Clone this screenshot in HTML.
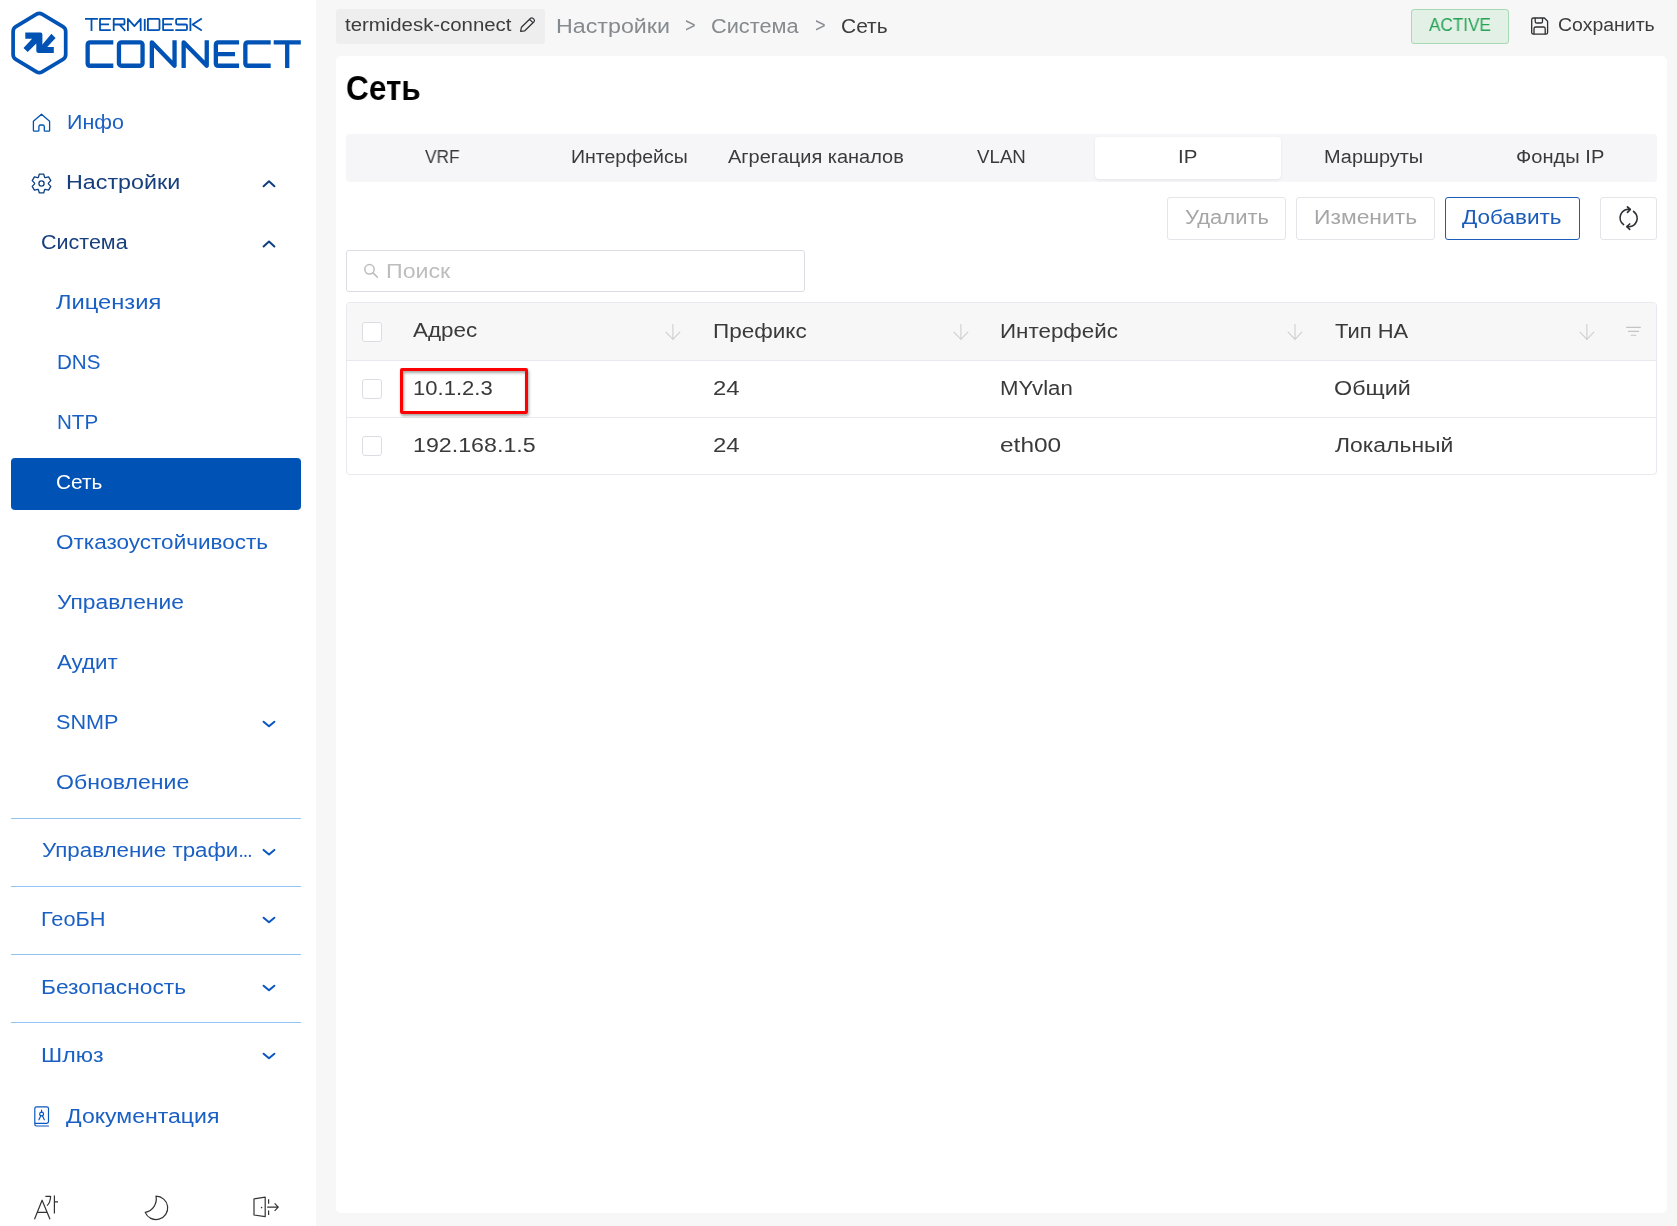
<!DOCTYPE html>
<html><head><meta charset="utf-8">
<style>
html,body{margin:0;padding:0;}
body{width:1677px;height:1226px;position:relative;overflow:hidden;background:#f7f7f7;font-family:"Liberation Sans",sans-serif;}
.t{position:absolute;line-height:1;white-space:nowrap;transform-origin:0 50%;will-change:transform;}
.sb{position:absolute;left:0;top:0;width:316px;height:1226px;background:#fff;}
.nav{font-size:20px;color:#0b57c0;}
.navd{font-size:20px;color:#0e3f80;}
.div{position:absolute;left:11px;width:290px;height:1px;background:#8fc6f6;}
.ic{position:absolute;}
.card{position:absolute;left:336px;top:56px;width:1331px;height:1157px;background:#fff;border-radius:5px;}
.chip{position:absolute;left:336px;top:9px;width:209px;height:35px;background:#eeeeee;border-radius:3px;}
.bc{font-size:20px;color:#858a8f;}
.dk{color:#3a3a3a;}
.badge{position:absolute;left:1411px;top:9px;width:96px;height:33px;background:#e2f0e6;border:1px solid #a6d9b4;border-radius:3px;}
.tabs{position:absolute;left:346px;top:134px;width:1311px;height:48px;background:#f6f6f9;border-radius:4px;}
.tabact{position:absolute;left:1095px;top:137px;width:186px;height:42px;background:#fff;border-radius:4px;box-shadow:0 1px 3px rgba(0,0,0,0.08);}
.tab{font-size:18px;color:#333;}
.btn{position:absolute;top:197px;height:41px;background:#fff;border:1px solid #e4e5e9;border-radius:3px;}
.btnt{font-size:20px;color:#a6a6a6;}
.search{position:absolute;left:346px;top:250px;width:457px;height:40px;border:1px solid #dcdde4;border-radius:3px;background:#fff;}
.table{position:absolute;left:346px;top:302px;width:1309px;height:171px;border:1px solid #e9e9f0;border-radius:4px;background:#fff;overflow:hidden;}
.thead{position:absolute;left:0;top:0;width:1309px;height:57px;background:#f7f7f7;border-bottom:1px solid #e8e8ee;}
.rowl{position:absolute;left:0;width:1309px;height:1px;background:#e8e8ee;}
.cell{font-size:20px;color:#333;}
.cb{position:absolute;left:362px;width:18px;height:18px;border:1px solid #dcdde2;border-radius:3px;background:#fff;}
</style></head><body>
<div class="sb"></div>

<!-- main -->
<div class="card"></div>
<div class="chip"></div>
<div class="badge"></div>
<div class="tabs"></div>
<div class="tabact"></div>
<div class="btn" style="left:1167px;width:117px;"></div>
<div class="btn" style="left:1296px;width:137px;"></div>
<div class="btn" style="left:1445px;width:133px;border-color:#1a5cb8;"></div>
<div class="btn" style="left:1600px;width:55px;"></div>
<div class="search"></div>
<div class="table">
  <div class="thead"></div>
  <div class="rowl" style="top:114px"></div>
</div>
<div class="cb" style="top:322px"></div>
<div class="cb" style="top:379px"></div>
<div class="cb" style="top:436px"></div>
<div style="position:absolute;left:400px;top:368px;width:122px;height:40px;border:3px solid #ff0000;border-radius:2px;box-shadow:1px 2px 3px rgba(0,0,0,0.35), inset 1px 2px 3px rgba(0,0,0,0.35);"></div>

<!--STATIC-->
<div style="position:absolute;left:11px;top:458px;width:290px;height:52px;background:#0052b4;border-radius:4px;"></div>
<div class="div" style="top:818px"></div>
<div class="div" style="top:886px"></div>
<div class="div" style="top:954px"></div>
<div class="div" style="top:1022px"></div>
<svg style="position:absolute;left:0;top:0" width="316" height="1226" viewBox="0 0 316 1226">
 <g fill="none" stroke="#0052b4">
  <path d="M36.56,14.14 Q39.30,12.50 42.05,14.14 L62.95,26.56 Q65.70,28.20 65.70,31.40 L65.70,54.60 Q65.70,57.80 62.95,59.44 L42.05,71.86 Q39.30,73.50 36.56,71.86 L15.84,59.44 Q13.10,57.80 13.10,54.60 L13.10,31.40 Q13.10,28.20 15.84,26.56 Z" stroke-width="3.7" stroke-linejoin="round"/>
 </g>
 <g fill="#0052b4">
  <path d="M25.3,32.6 H40.6 Q42.4,32.6 42.4,34.4 V46.9 H53.8 V52.9 H38.1 Q36.3,52.9 36.3,51.1 V43.5 L27.7,52.1 L23.5,47.9 L32.1,38.7 H25.3 Z"/>
  <path d="M51.4,33.8 L55.6,38 L47.2,46.9 H40 L42.4,44.5 Z"/>
 </g>
 <g fill="none" stroke="#0052b4" stroke-width="4.3" stroke-linejoin="round">
  <path d="M113.3,42.35 H90.2 Q87.65,42.35 87.65,44.9 V63.2 Q87.65,65.75 90.2,65.75 H113.3"/>
  <rect x="118.95" y="42.35" width="23.6" height="23.4" rx="2.5"/>
  <path d="M151.85,67.9 V42.35 L174.55,65.75 V40.2"/>
  <path d="M183.65,67.9 V42.35 L206.75,65.75 V40.2"/>
  <path d="M239.1,42.35 H218.4 Q215.85,42.35 215.85,44.9 V63.2 Q215.85,65.75 218.4,65.75 H239.1 M215.85,54.2 H235"/>
  <path d="M270.7,42.35 H247.9 Q245.35,42.35 245.35,44.9 V63.2 Q245.35,65.75 247.9,65.75 H270.7"/>
  <path d="M273.7,42.35 H300.8 M287.2,42.35 V67.9"/>
 </g>
 <g fill="none" stroke="#0052b4" stroke-width="1.8" stroke-linejoin="round">
  <path d="M85,18.9 H97.9 M91.5,18.9 V30.9"/>
  <path d="M110.8,18.9 H100 V30.1 H110.8 M100,24.4 H109"/>
  <path d="M113.7,30.9 V18.9 H123.5 Q124.5,18.9 124.5,19.9 V23.5 Q124.5,24.5 123.5,24.5 H113.7 M119.5,24.5 L125.3,30.9"/>
  <path d="M127.9,30.9 V18.9 L134.4,26.2 L140.7,18.9 V30.9"/>
  <path d="M144.75,18.9 V30.9"/>
  <path d="M147.9,18.9 H158.3 Q159.5,18.9 159.5,20.1 V28.9 Q159.5,30.1 158.3,30.1 H147.9 Z"/>
  <path d="M173.7,18.9 H163.1 V30.1 H173.7 M163.1,24.4 H172"/>
  <path d="M187.8,18.9 H177.3 Q176.1,18.9 176.1,20.1 V23.3 Q176.1,24.5 177.3,24.5 H185.8 Q187,24.5 187,25.7 V28.9 Q187,30.1 185.8,30.1 H175.3"/>
  <path d="M190.4,18.1 V30.9 M201.8,18.5 L192.6,24.5 L201.8,30.5"/>
 </g>
 <circle cx="241.1" cy="855.9" r="1.15" fill="#1a60c4"/><circle cx="245.5" cy="855.9" r="1.15" fill="#1a60c4"/><circle cx="249.9" cy="855.9" r="1.15" fill="#1a60c4"/>
 <!-- home -->
 <path d="M41.5,114.3 L33.4,121.3 V130.4 Q33.4,131.2 34.2,131.2 H38.1 Q38.9,131.2 38.9,130.4 V126.8 Q38.9,125 40.7,125 H42.5 Q44.3,125 44.3,126.8 V130.4 Q44.3,131.2 45.1,131.2 H48.8 Q49.6,131.2 49.6,130.4 V121.3 Z" fill="none" stroke="#0052b4" stroke-width="1.3" stroke-linejoin="round"/>
 <!-- gear -->
 <path d="M38.37,177.35 L39.32,174.05 L43.68,174.05 L44.63,177.35 L45.26,177.71 L48.59,176.88 L50.78,180.66 L48.39,183.14 L48.39,183.86 L50.78,186.34 L48.59,190.12 L45.26,189.29 L44.63,189.65 L43.68,192.95 L39.32,192.95 L38.37,189.65 L37.74,189.29 L34.41,190.12 L32.22,186.34 L34.61,183.86 L34.61,183.14 L32.22,180.66 L34.41,176.88 L37.74,177.71Z" fill="none" stroke="#0e3f80" stroke-width="1.3" stroke-linejoin="round"/>
 <circle cx="41.5" cy="183.5" r="2.6" fill="none" stroke="#0e3f80" stroke-width="1.3"/>
 <!-- chevrons -->
 <g fill="none" stroke-width="2" stroke-linecap="round" stroke-linejoin="round">
  <path d="M263.6,186.2 L269,181.2 L274.4,186.2" stroke="#0e3f80"/>
  <path d="M263.6,246.5 L269,241.5 L274.4,246.5" stroke="#0e3f80"/>
  <path d="M263.6,721.7 L269,726.3 L274.4,721.7" stroke="#0b57c0"/>
  <path d="M263.6,849.9 L269,854.5 L274.4,849.9" stroke="#0b57c0"/>
  <path d="M263.6,917.7 L269,922.3 L274.4,917.7" stroke="#0b57c0"/>
  <path d="M263.6,985.7 L269,990.3 L274.4,985.7" stroke="#0b57c0"/>
  <path d="M263.6,1053.7 L269,1058.3 L274.4,1053.7" stroke="#0b57c0"/>
 </g>
 <!-- book -->
 <g fill="none" stroke="#0b57c0" stroke-width="1.2" stroke-linejoin="round" stroke-linecap="round">
  <path d="M34.8,1123.3 V1108.6 Q34.8,1106.9 36.5,1106.9 H46.8 Q48.5,1106.9 48.5,1108.6 V1121.6 Q48.5,1123.3 46.8,1123.3 H34.8 V1124.3 Q34.8,1126 36.5,1126 H48.5"/>
  <circle cx="41.6" cy="1114" r="1.9"/>
  <path d="M41.6,1110.2 V1112.1 M40.8,1115.8 L38.9,1119.8 M42.4,1115.8 L44.3,1119.8"/>
 </g>
 <!-- bottom icons -->
 <g fill="none" stroke="#333" stroke-width="1.2" stroke-linejoin="round">
  <path d="M34.5,1219.2 L42.1,1200.2 L50,1219.2 M37.3,1212.4 H47.2"/>
  <path d="M45.4,1196.4 H50.6 Q50.4,1202.5 47,1205.6 M54.4,1195.4 V1213.4 M54.4,1201.8 H58"/>
  <path transform="translate(140.4,1192.3) scale(1.3)" stroke-width="0.95" d="M12,3 A10.5,10.5 0 0 1 3.687,15.446 A9,9 0 1 0 12,3 Z"/>
  <path d="M254,1198.8 L265.2,1197.2 V1216.6 L254,1215 Z M268.6,1199.2 V1203.8 M268.6,1210.4 V1215 M267.2,1207.1 H278.2 M274.6,1203.4 L278.3,1207.1 L274.6,1210.8"/>
 </g>
 <circle cx="261.6" cy="1207.6" r="0.8" fill="#333"/>
</svg>
<svg style="position:absolute;left:316px;top:0" width="1361" height="1226" viewBox="316 0 1361 1226">
 <!-- pencil -->
 <g fill="none" stroke="#2e3033" stroke-width="1.2" stroke-linejoin="round">
  <path d="M520.6,31.3 L521.4,27.3 L530.6,18.3 Q531.8,17.3 533,18.4 L534,19.4 Q535,20.6 534,21.7 L524.8,30.8 Z M529.6,19.4 L532.9,22.7"/>
 </g>
 <!-- save -->
 <g fill="none" stroke="#2e3033" stroke-width="1.3" stroke-linejoin="round">
  <path d="M1531.7,19.7 Q1531.7,18 1533.4,18 H1544.4 L1547.6,21.2 V32.5 Q1547.6,34.2 1545.9,34.2 H1533.4 Q1531.7,34.2 1531.7,32.5 Z"/>
  <path d="M1535.2,18 V21.4 Q1535.2,23 1536.8,23 H1540.9 Q1542.5,23 1542.5,21.4 V18"/>
  <path d="M1534,34.2 V28.8 Q1534,27 1535.8,27 H1543.4 Q1545.2,27 1545.2,28.8 V34.2"/>
 </g>
 <!-- refresh -->
 <g fill="none" stroke="#2e3033" stroke-width="1.7" stroke-linecap="round" stroke-linejoin="round">
  <path d="M1623.6,224.6 A8.4,8.4 0 0 1 1630,209.5"/>
  <path d="M1627.5,207 L1630.3,209.5 L1627.5,212.3"/>
  <path d="M1633.6,211.5 A8.4,8.4 0 0 1 1627.2,226.6"/>
  <path d="M1629.7,224 L1626.9,226.6 L1629.7,229.3"/>
 </g>
 <!-- search -->
 <g fill="none" stroke="#bcbcbc" stroke-width="1.5" stroke-linecap="round">
  <circle cx="369.5" cy="269.3" r="4.7"/>
  <path d="M373,272.9 L377.4,277.2"/>
 </g>
 <!-- sort arrows -->
 <g fill="none" stroke="#cfcfcf" stroke-width="1.1" stroke-linecap="round" stroke-linejoin="round">
  <path d="M672.9,324.6 V339.4 M666,332.2 L672.9,339.4 L679.8,332.2"/>
  <path d="M960.9,324.6 V339.4 M954,332.2 L960.9,339.4 L967.8,332.2"/>
  <path d="M1295,324.6 V339.4 M1288.1,332.2 L1295,339.4 L1301.9,332.2"/>
  <path d="M1586.9,324.6 V339.4 M1580,332.2 L1586.9,339.4 L1593.8,332.2"/>
 </g>
 <g fill="none" stroke="#c4c4c4" stroke-width="1.1" stroke-linecap="round">
  <path d="M1626.6,327.4 H1640.3 M1628.5,331.4 H1638.6 M1631.2,335.3 H1635.8"/>
 </g>
</svg>
<!--/STATIC-->
<!--TEXT-->
<div class="t" style="left:66.6px;top:111.7px;font-size:20px;color:#1a60c4;transform:scaleX(1.073)">Инфо</div>
<div class="t" style="left:66.2px;top:172.0px;font-size:20px;color:#173f7e;transform:scaleX(1.165)">Настройки</div>
<div class="t" style="left:40.6px;top:232.3px;font-size:20px;color:#173f7e;transform:scaleX(1.075)">Система</div>
<div class="t" style="left:55.9px;top:292.4px;font-size:20px;color:#1a60c4;transform:scaleX(1.185)">Лицензия</div>
<div class="t" style="left:56.9px;top:352.1px;font-size:20px;color:#1a60c4;transform:scaleX(1.029)">DNS</div>
<div class="t" style="left:56.9px;top:412.0px;font-size:20px;color:#1a60c4;transform:scaleX(1.029)">NTP</div>
<div class="t" style="left:55.8px;top:471.8px;font-size:20px;color:#ffffff;transform:scaleX(1.040)">Сеть</div>
<div class="t" style="left:55.7px;top:531.9px;font-size:20px;color:#1a60c4;transform:scaleX(1.126)">Отказоустойчивость</div>
<div class="t" style="left:56.8px;top:592.0px;font-size:20px;color:#1a60c4;transform:scaleX(1.141)">Управление</div>
<div class="t" style="left:56.8px;top:652.0px;font-size:20px;color:#1a60c4;transform:scaleX(1.115)">Аудит</div>
<div class="t" style="left:55.7px;top:712.0px;font-size:20px;color:#1a60c4;transform:scaleX(1.082)">SNMP</div>
<div class="t" style="left:55.6px;top:772.0px;font-size:20px;color:#1a60c4;transform:scaleX(1.154)">Обновление</div>
<div class="t" style="left:41.6px;top:840.2px;font-size:20px;color:#1a60c4;transform:scaleX(1.117)">Управление трафи</div>
<div class="t" style="left:40.7px;top:908.7px;font-size:20px;color:#1a60c4;transform:scaleX(1.089)">ГеоБН</div>
<div class="t" style="left:40.7px;top:976.7px;font-size:20px;color:#1a60c4;transform:scaleX(1.137)">Безопасность</div>
<div class="t" style="left:40.6px;top:1044.7px;font-size:20px;color:#1a60c4;transform:scaleX(1.155)">Шлюз</div>
<div class="t" style="left:65.7px;top:1105.8px;font-size:20px;color:#1a60c4;transform:scaleX(1.153)">Документация</div>
<div class="t" style="left:345.2px;top:16.1px;font-size:18px;color:#3c3c3c;transform:scaleX(1.132)">termidesk-connect</div>
<div class="t" style="left:556.0px;top:15.7px;font-size:20px;color:#858a8f;transform:scaleX(1.162)">Настройки</div>
<div class="t" style="left:685.1px;top:15.1px;font-size:20px;color:#858a8f;transform:scaleX(0.900)">></div>
<div class="t" style="left:710.6px;top:15.7px;font-size:20px;color:#858a8f;transform:scaleX(1.087)">Система</div>
<div class="t" style="left:815.0px;top:15.1px;font-size:20px;color:#858a8f;transform:scaleX(0.910)">></div>
<div class="t" style="left:840.6px;top:15.7px;font-size:20px;color:#3c3c3c;transform:scaleX(1.049)">Сеть</div>
<div class="t" style="left:1428.9px;top:15.9px;font-size:18px;color:#27a356;transform:scaleX(0.952)">ACTIVE</div>
<div class="t" style="left:1557.8px;top:15.8px;font-size:18px;color:#3c3c3c;transform:scaleX(1.081)">Сохранить</div>
<div class="t" style="left:345.8px;top:70.6px;font-size:35.5px;color:#000000;font-weight:700;transform:scaleX(0.888)">Сеть</div>
<div class="t" style="left:425.4px;top:148.1px;font-size:18px;color:#3a3a3a;transform:scaleX(0.961)">VRF</div>
<div class="t" style="left:570.7px;top:148.1px;font-size:18px;color:#3a3a3a;transform:scaleX(1.083)">Интерфейсы</div>
<div class="t" style="left:727.5px;top:148.1px;font-size:18px;color:#3a3a3a;transform:scaleX(1.110)">Агрегация каналов</div>
<div class="t" style="left:977.4px;top:148.1px;font-size:18px;color:#3a3a3a;transform:scaleX(1.039)">VLAN</div>
<div class="t" style="left:1177.9px;top:148.1px;font-size:18px;color:#3a3a3a;transform:scaleX(1.140)">IP</div>
<div class="t" style="left:1323.9px;top:148.1px;font-size:18px;color:#3a3a3a;transform:scaleX(1.106)">Маршруты</div>
<div class="t" style="left:1515.9px;top:148.1px;font-size:18px;color:#3a3a3a;transform:scaleX(1.117)">Фонды IP</div>
<div class="t" style="left:1184.7px;top:207.4px;font-size:20px;color:#a6a6a6;transform:scaleX(1.101)">Удалить</div>
<div class="t" style="left:1313.9px;top:207.4px;font-size:20px;color:#a6a6a6;transform:scaleX(1.143)">Изменить</div>
<div class="t" style="left:1462.2px;top:207.4px;font-size:20px;color:#1a5cb8;transform:scaleX(1.127)">Добавить</div>
<div class="t" style="left:386.3px;top:260.5px;font-size:20px;color:#bdbdbd;transform:scaleX(1.158)">Поиск</div>
<div class="t" style="left:412.8px;top:320.2px;font-size:20px;color:#3a3a3a;transform:scaleX(1.121)">Адрес</div>
<div class="t" style="left:712.8px;top:320.5px;font-size:20px;color:#3a3a3a;transform:scaleX(1.126)">Префикс</div>
<div class="t" style="left:1000.3px;top:320.5px;font-size:20px;color:#3a3a3a;transform:scaleX(1.119)">Интерфейс</div>
<div class="t" style="left:1334.9px;top:320.5px;font-size:20px;color:#3a3a3a;transform:scaleX(1.096)">Тип HA</div>
<div class="t" style="left:413.4px;top:378.4px;font-size:20px;color:#3a3a3a;transform:scaleX(1.103)">10.1.2.3</div>
<div class="t" style="left:712.7px;top:378.4px;font-size:20px;color:#3a3a3a;transform:scaleX(1.195)">24</div>
<div class="t" style="left:1000.3px;top:378.4px;font-size:20px;color:#3a3a3a;transform:scaleX(1.109)">MYvlan</div>
<div class="t" style="left:1333.7px;top:378.4px;font-size:20px;color:#3a3a3a;transform:scaleX(1.167)">Общий</div>
<div class="t" style="left:413.3px;top:435.1px;font-size:20px;color:#3a3a3a;transform:scaleX(1.161)">192.168.1.5</div>
<div class="t" style="left:712.7px;top:435.1px;font-size:20px;color:#3a3a3a;transform:scaleX(1.195)">24</div>
<div class="t" style="left:1000.2px;top:435.1px;font-size:20px;color:#3a3a3a;transform:scaleX(1.222)">eth00</div>
<div class="t" style="left:1334.9px;top:435.1px;font-size:20px;color:#3a3a3a;transform:scaleX(1.146)">Локальный</div>
<!--/TEXT-->
</body></html>
